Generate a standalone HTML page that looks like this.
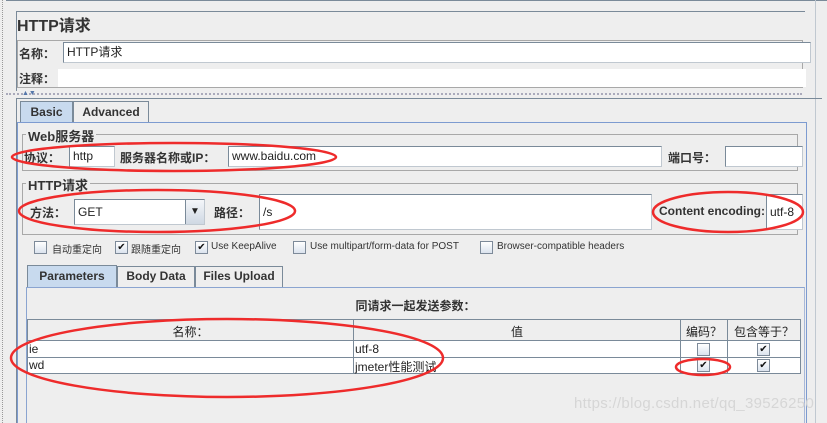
<!DOCTYPE html>
<html><head><meta charset="utf-8"><style>
*{margin:0;padding:0;box-sizing:border-box}
body{width:827px;height:423px;background:#eeeeee;position:relative;overflow:hidden;font-family:"Liberation Sans","Noto Sans CJK SC",sans-serif;font-size:12px;color:#222}
.a{position:absolute}
.in{position:absolute;background:#fff;border:1px solid #7a8a99;border-right-color:#c0c8d0;border-bottom-color:#c0c8d0;padding-left:3px;line-height:18px}
.b{font-weight:bold;color:#333}
.cb{position:absolute;width:13px;height:13px;border:1px solid #7d8a99;background:linear-gradient(#fff,#dbe3ee);font-size:10px;line-height:11px;text-align:center;color:#111}
.lbl{position:absolute;font-size:11px;color:#333}
.tab{position:absolute;border:1px solid #7a8a99;border-bottom:none;font-weight:bold;text-align:center;color:#333}
</style></head><body>
<div class="a" style="left:2px;top:0;width:1px;height:423px;border-left:1px dotted #999"></div>
<div class="a" style="left:6px;top:0;width:821px;height:1px;background:#7a8a99"></div>
<div class="a" style="left:815px;top:0;width:1px;height:423px;background:#c0c8d0"></div>
<div class="a" style="left:16px;top:11px;width:789px;height:80px;border-top:1px solid #7a8a99;border-left:1px solid #7a8a99"></div>
<div class="a b" style="left:17px;top:12px;font-size:16px">HTTP请求</div>
<div class="a" style="left:17px;top:40px;width:786px;height:48px;border:1px solid #a8a8a8"></div>
<div class="a b" style="left:19px;top:45px;font-size:12px">名称：</div>
<div class="in" style="left:63px;top:42px;width:748px;height:21px;font-size:12px">HTTP请求</div>
<div class="a b" style="left:19px;top:70px">注释：</div>
<div class="a" style="left:58px;top:69px;width:748px;height:18px;background:#fff"></div>
<div class="a" style="left:6px;top:93px;width:796px;height:0;border-top:2px dotted #aab"></div>
<div class="a" style="left:22px;top:90px;font-size:7px;color:#5577aa">▲▼</div>
<div class="a" style="left:16px;top:98px;width:806px;height:1px;background:#7a8a99"></div>
<div class="a" style="left:16px;top:98px;width:1px;height:325px;background:#7a8a99"></div>
<div class="tab" style="left:20px;top:101px;width:53px;height:22px;background:#c8daee;line-height:20px">Basic</div>
<div class="tab" style="left:73px;top:101px;width:76px;height:21px;line-height:20px">Advanced</div>
<div class="a" style="left:17px;top:122px;width:790px;height:301px;border:1px solid #7d9bd0;border-bottom:none"></div>
<div class="a" style="left:22px;top:134px;width:776px;height:37px;border:1px solid #a8a8a8"></div>
<div class="a b" style="left:26px;top:126px;background:#eee;padding:0 2px;font-size:13px">Web服务器</div>
<div class="a b" style="left:24px;top:149px">协议：</div>
<div class="in" style="left:69px;top:146px;width:46px;height:21px">http</div>
<div class="a b" style="left:120px;top:149px">服务器名称或IP：</div>
<div class="in" style="left:228px;top:146px;width:434px;height:21px">www.baidu.com</div>
<div class="a b" style="left:668px;top:149px">端口号：</div>
<div class="in" style="left:725px;top:146px;width:78px;height:21px"></div>
<div class="a" style="left:22px;top:183px;width:776px;height:52px;border:1px solid #a8a8a8"></div>
<div class="a b" style="left:26px;top:175px;background:#eee;padding:0 2px;font-size:13px">HTTP请求</div>
<div class="a b" style="left:30px;top:204px">方法：</div>
<div class="in" style="left:74px;top:199px;width:131px;height:26px;line-height:24px">GET</div>
<div class="a" style="left:185px;top:200px;width:19px;height:24px;border-left:1px solid #7a8a99;background:linear-gradient(#f4f6f9,#cfd8e3);text-align:center;font-size:10px;line-height:24px">▼</div>
<div class="a b" style="left:214px;top:204px">路径：</div>
<div class="in" style="left:259px;top:194px;width:393px;height:36px;line-height:34px">/s</div>
<div class="a b" style="left:659px;top:204px">Content encoding:</div>
<div class="in" style="left:766px;top:194px;width:37px;height:36px;line-height:34px">utf-8</div>
<div class="cb" style="left:34px;top:241px"></div><div class="lbl" style="left:52px;top:241px;font-size:10px">自动重定向</div>
<div class="cb" style="left:115px;top:241px">✔</div><div class="lbl" style="left:131px;top:241px;font-size:10px">跟随重定向</div>
<div class="cb" style="left:195px;top:241px">✔</div><div class="lbl" style="left:211px;top:241px;font-size:10px">Use KeepAlive</div>
<div class="cb" style="left:293px;top:241px"></div><div class="lbl" style="left:310px;top:241px;font-size:10px">Use multipart/form-data for POST</div>
<div class="cb" style="left:480px;top:241px"></div><div class="lbl" style="left:497px;top:241px;font-size:10px">Browser-compatible headers</div>
<div class="tab" style="left:27px;top:265px;width:90px;height:23px;background:#c8daee;line-height:21px">Parameters</div>
<div class="tab" style="left:117px;top:266px;width:78px;height:21px;line-height:19px">Body Data</div>
<div class="tab" style="left:195px;top:266px;width:88px;height:21px;line-height:19px">Files Upload</div>
<div class="a" style="left:26px;top:287px;width:779px;height:136px;border:1px solid #8aa4d0;border-bottom:none;border-right-color:#a8b8d8"></div>
<div class="a b" style="left:0;width:827px;top:297px;text-align:center;padding-left:4px">同请求一起发送参数：</div>
<div class="a" style="left:27px;top:319px;width:774px;height:55px;border:1px solid #7a8a99;background:#fff"></div>
<div class="a" style="left:28px;top:320px;width:772px;height:21px;background:#eee;border-bottom:1px solid #7a8a99"></div>
<div class="a" style="left:28px;top:357px;width:772px;height:1px;background:#7a8a99"></div>
<div class="a" style="left:353px;top:320px;width:1px;height:54px;background:#7a8a99"></div>
<div class="a" style="left:680px;top:320px;width:1px;height:54px;background:#7a8a99"></div>
<div class="a" style="left:727px;top:320px;width:1px;height:54px;background:#7a8a99"></div>
<div class="a" style="left:28px;top:323px;width:325px;text-align:center">名称：</div>
<div class="a" style="left:354px;top:323px;width:326px;text-align:center">值</div>
<div class="a" style="left:681px;top:323px;width:46px;text-align:center">编码？</div>
<div class="a" style="left:728px;top:323px;width:72px;text-align:center">包含等于？</div>
<div class="a" style="left:29px;top:342px">ie</div>
<div class="a" style="left:355px;top:342px">utf-8</div>
<div class="a" style="left:29px;top:358px">wd</div>
<div class="a" style="left:355px;top:358px">jmeter性能测试</div>
<div class="cb" style="left:697px;top:343px"></div>
<div class="cb" style="left:757px;top:343px">✔</div>
<div class="cb" style="left:697px;top:359px">✔</div>
<div class="cb" style="left:757px;top:359px">✔</div>
<div class="a" style="left:574px;top:395px;font-size:15px;color:#d6d6d6;letter-spacing:0.3px">https://blog.csdn.net/qq_39526250</div>
<svg class="a" style="left:0;top:0" width="827" height="423"><g fill="none" stroke="#ee2b2b" stroke-width="2.5">
<ellipse cx="174" cy="157" rx="162" ry="14"/>
<ellipse cx="157" cy="211" rx="138" ry="21"/>
<ellipse cx="728" cy="212" rx="75" ry="20"/>
<ellipse cx="227" cy="358" rx="216" ry="39"/>
<ellipse cx="703" cy="367" rx="27" ry="8"/>
</g></svg>
</body></html>
